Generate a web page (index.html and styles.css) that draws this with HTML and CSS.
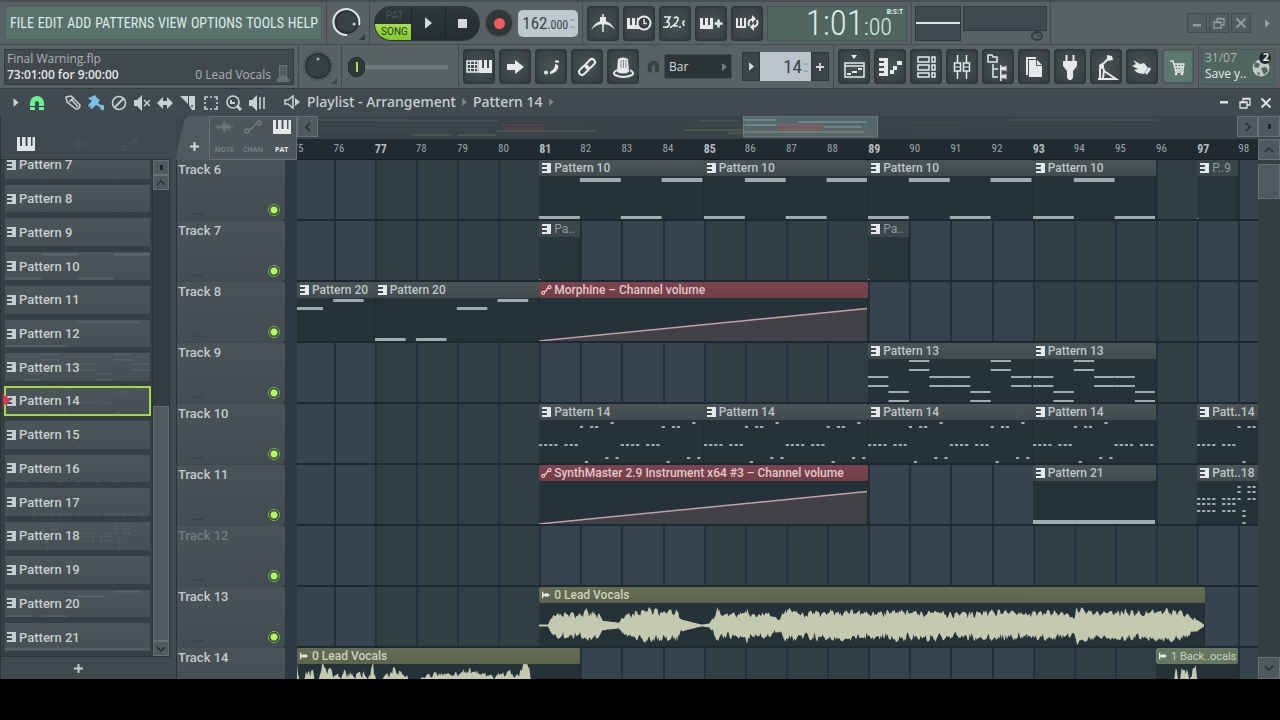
FILE: index.html
```html
<!DOCTYPE html>
<html lang="en">
<head>
    <meta charset="UTF-8">
    <meta name="viewport" content="width=device-width, initial-scale=1">
    <title>Final Warning.flp</title>
    <link rel="stylesheet" href="styles.css">
</head>
<body>
    <!-- Shared icons -->
    <svg class="symbols" aria-hidden="true">
        <symbol id="i-steps" viewBox="0 0 9 10"><path fill="currentColor" d="M4 0h5v10H0V8h5V7H4zM0 0h5v2H0zM0 4h5v2H0z"/><path stroke="#3e474a" stroke-width="1.600" d="M0 2.900h5M0 7h5"/></symbol>
        <symbol id="i-auto" viewBox="0 0 11 10"><g fill="none" stroke="currentColor" stroke-width="1.300"><circle cx="2.200" cy="7.800" r="1.500"/><circle cx="8.500" cy="2.200" r="1.500"/><path d="M3.300 6.700l2-1 .8-2 1.400-.8"/></g></symbol>
        <symbol id="i-audio" viewBox="0 0 10 9"><path fill="currentColor" d="M0 1h1.500v2.500h2V2l2 1.500V2L9 4.500 5.500 7V5.500L3.500 7V5.500h-2V8H0z"/></symbol>
        <symbol id="i-piano" viewBox="0 0 18 14"><path fill="currentColor" d="M0 0h3v9h2V0h3.500v9h2V0H14v9h1.500V0H18v14H0z"/></symbol>
        <symbol id="i-wave" viewBox="0 0 22 14"><path fill="none" stroke="currentColor" stroke-width="1.300" d="M0 7h22M3 5v4M5 4v6M7 6v2M9 3v8M11 0v14M13 2v10M15 5v4M17 3v8M19 6v2"/></symbol>
        <symbol id="i-line" viewBox="0 0 18 14"><g fill="none" stroke="currentColor" stroke-width="1.400"><circle cx="2.800" cy="11" r="2"/><circle cx="15" cy="3" r="2"/><path d="M4.500 10l4-2 2-3.500L13 4"/></g></symbol>
        <symbol id="i-magnet" viewBox="0 0 16 16"><path fill="currentColor" d="M1 15V8a7 7 0 0 1 14 0v7h-5V8a2 2 0 0 0-4 0v7z"/><path stroke="#333c40" d="M1 11.500h5M10 11.500h5"/></symbol>
        <symbol id="i-tri" viewBox="0 0 6 10"><path fill="currentColor" d="M0 0l6 5-6 5z"/></symbol>
        <symbol id="i-min" viewBox="0 0 12 12"><path fill="currentColor" d="M2 4h8v2.500H2z"/></symbol>
        <symbol id="i-restore" viewBox="0 0 12 12"><path fill="none" stroke="currentColor" stroke-width="1.300" d="M1 5h7v6H1zM1 5.500h7M4 5V1.500h7V8H8M4 2h7"/></symbol>
        <symbol id="i-close" viewBox="0 0 12 12"><path stroke="currentColor" stroke-width="2" d="M1.500 1.500l9 9M10.500 1.500l-9 9"/></symbol>
        <symbol id="i-down" viewBox="0 0 10 6"><path fill="none" stroke="currentColor" stroke-width="1.400" d="M1 1l4 4 4-4"/></symbol>
        <symbol id="i-plus" viewBox="0 0 10 10"><path stroke="currentColor" stroke-width="2.200" d="M5 0v10M0 5h10"/></symbol>
    </svg>

    <div class="app">
        <header class="toolbar">
            <div class="panel">
                <nav class="menu">
                    <button>FILE</button><button>EDIT</button><button>ADD</button><button>PATTERNS</button><button>VIEW</button><button>OPTIONS</button><button>TOOLS</button><button>HELP</button>
                </nav>
            </div>
            <div class="panel knob-panel">
                <button class="knob" aria-label="Main volume">
                    <svg viewBox="0 0 36 36"><circle cx="17" cy="17" r="11" fill="#3a4145" stroke="#2b3135" stroke-width="2"/><path d="M17 30A13 13 0 1 1 29 20" fill="none" stroke="#dfe6e6" stroke-width="2"/><circle cx="24" cy="19" r="1.500" fill="#c5cccc"/><path d="M29 35h6v-6z" fill="#343b3f"/></svg>
                </button>
            </div>
            <div class="panel transport">
                <div class="pill">
                    <div class="mode">
                        <button>PAT</button>
                        <button class="on">SONG</button>
                    </div>
                    <button class="play" aria-label="Play"><svg width="7" height="12" viewBox="0 0 6 10"><use href="#i-tri"/></svg></button>
                    <button class="stop" aria-label="Stop"><i></i></button>
                </div>
                <button class="record" aria-label="Record"><i></i></button>
                <label class="tempo"><input value="162" aria-label="Tempo"><small>.000</small><span class="spin"></span></label>
            </div>
            <div class="panel tools">
                <button class="tool" aria-label="Metronome"><svg viewBox="0 0 32 34"><path d="M4 24Q8 15 16 15t12 9q-5-6-12-6T4 24z" fill="#e4eaea"/><path d="M16 8v18" stroke="#e4eaea" stroke-width="1.500"/><path d="M13 11h6v5l-3 4-3-4z" fill="#e4eaea"/></svg></button>
                <button class="tool" aria-label="Wait for input"><svg viewBox="0 0 32 34"><path d="M4 12h3v7h2v-7h3v7h2v-7h3v11H4z" fill="#e4eaea"/><circle cx="21" cy="17" r="6.500" fill="#363d41" stroke="#e4eaea" stroke-width="2"/><path d="M21 13v4.500h3" fill="none" stroke="#e4eaea" stroke-width="1.500"/></svg></button>
                <button class="tool" aria-label="Countdown"><svg viewBox="0 0 32 34"><path d="M5 11h6l-3 5q3 0 2 3-1 3-6 2M15 12q4-2 4 1 0 3-5 7h5M26 15q-2 0-2 2l1 3M12 20v2M21 20v2" fill="none" stroke="#e4eaea" stroke-width="1.700"/></svg></button>
                <button class="tool" aria-label="Blend recording"><svg viewBox="0 0 32 34"><path d="M5 12h3v7h2v-7h3v7h2v-7h3v11H5z" fill="#e4eaea"/><path d="M23.500 13.500v8M19.500 17.500h8" stroke="#e4eaea" stroke-width="2.500"/></svg></button>
                <button class="tool" aria-label="Loop recording"><svg viewBox="0 0 32 34"><path d="M5 12h2v8h2v-8h2v8h2v-8h2v10H5z" fill="#e4eaea"/><path d="M18 20q-2-6 4-7M26 14q2 6-4 7" fill="none" stroke="#e4eaea" stroke-width="2"/><path d="M21 9l4 4-4 4zM23 17v8l-4-4z" fill="#e4eaea"/></svg></button>
                <div class="clock"><span>1:01<small>:00</small></span><sup>B:S:T</sup></div>
            </div>
            <div class="panel meters">
                <div class="scope"></div>
                <div class="cpu"><div class="cpu-box"></div><svg width="12" height="10" viewBox="0 0 12 10"><ellipse cx="6" cy="5" rx="5" ry="4" fill="none" stroke="#343c40" stroke-width="2"/><path d="M6 2v3h3" fill="none" stroke="#343c40"/></svg></div>
            </div>
            <div class="window-buttons">
                <button aria-label="Minimize"><svg><use href="#i-min" y="3"/></svg></button>
                <button aria-label="Restore"><svg><use href="#i-restore"/></svg></button>
                <button aria-label="Close"><svg><use href="#i-close"/></svg></button>
                <svg class="more" viewBox="0 0 6 10"><use href="#i-tri"/></svg>
            </div>
        </header>

        <div class="toolbar second">
            <div class="panel">
                <div class="hint">
                    <div class="file-name">Final Warning.flp</div>
                    <div class="hint-row"><strong>73:01:00 for 9:00:00</strong><span>0 Lead Vocals</span></div>
                    <svg class="hint-icon" viewBox="0 0 14 18"><path d="M3 1h8v12l3 3-2 2H2l-2-2 3-3z" fill="#667074"/><path d="M5 2v10M7 2v10M9 2v10" stroke="#41494d"/></svg>
                </div>
            </div>
            <div class="panel knob-panel pitch">
                <button class="knob" aria-label="Main pitch">
                    <svg viewBox="0 0 36 36"><circle cx="16" cy="17" r="14" fill="none" stroke="#464f53" stroke-width="2" stroke-dasharray="2 2"/><circle cx="16" cy="17" r="12" fill="#373f43" stroke="#2d3438" stroke-width="2"/><circle cx="16" cy="10" r="1.500" fill="#aab2b2"/><path d="M29 35h6v-6z" fill="#3d4549"/></svg>
                </button>
            </div>
            <div class="panel volume">
                <input type="range" value="0" aria-label="Volume">
            </div>
            <div class="panel tools">
                <button class="tool" aria-label="Typing keyboard"><svg viewBox="0 0 32 34"><path d="M4 11h11v11H4z" fill="none" stroke="#e4eaea" stroke-width="1.500"/><path d="M4 14.500h11M4 18.500h11M7.500 11v11M11.500 11v11" stroke="#e4eaea"/><path d="M16 10h3v8h2v-8h3v8h2v-8h3v13H16z" fill="#e4eaea"/></svg></button>
                <button class="tool" aria-label="Step"><svg viewBox="0 0 32 34"><path d="M8 14h8v-4l9 7-9 7v-4H8z" fill="#e4eaea"/></svg></button>
                <button class="tool" aria-label="Slide"><svg viewBox="0 0 32 34"><circle cx="11" cy="22.500" r="2" fill="#e4eaea"/><path d="M15 24q5-1 7-4 2-2 1-5l-3-1q1 4-5 8z" fill="#e4eaea"/><path d="M20 11.500h4" stroke="#e4eaea" stroke-width="2"/></svg></button>
                <button class="tool" aria-label="Link"><svg viewBox="0 0 32 34"><g fill="none" stroke="#e4eaea" stroke-width="2" transform="rotate(-45 16 17)"><rect x="6" y="14" width="11" height="6" rx="3"/><rect x="15" y="14" width="11" height="6" rx="3"/></g></svg></button>
                <button class="tool" aria-label="Plugin"><svg viewBox="0 0 32 34"><path d="M11 9q5-3 10 0l1 13q-6 3-12 0z" fill="#e4eaea"/><path d="M14 10v8M16.500 10v8M19 10v8" stroke="#7d8588"/><path d="M10 20q-5 3-2 5 8 4 17 0 3-2-2-5" fill="none" stroke="#e4eaea" stroke-width="2"/></svg></button>
                <svg class="snap-icon" viewBox="0 0 16 16"><use href="#i-magnet"/></svg>
                <select class="snap" aria-label="Snap"><option>Bar</option><option>Beat</option><option>Step</option></select>
                <div class="pattern-picker">
                    <button aria-label="Next"><svg width="5" height="9" viewBox="0 0 6 10"><use href="#i-tri"/></svg></button>
                    <label><input value="14" aria-label="Pattern number"><span class="spin"></span></label>
                    <button aria-label="Add"><svg width="8" height="8" viewBox="0 0 10 10"><use href="#i-plus"/></svg></button>
                </div>
            </div>
            <div class="panel tools windows">
                <button class="tool" aria-label="Playlist"><svg viewBox="0 0 32 34"><path d="M13 5h6l-3 4z" fill="#e4eaea"/><path d="M7 13h19v14H7zM7 16h19" fill="none" stroke="#e4eaea" stroke-width="1.500"/><path d="M9 24h4M14 22h5M20 19h4" stroke="#e4eaea" stroke-width="2"/></svg></button>
                <button class="tool" aria-label="Piano roll"><svg viewBox="0 0 32 34"><path d="M5 8h9v18H5v-3h5v-2H5v-3h5v-2H5v-3h5v-2H5z" fill="#e4eaea"/><path d="M16 22h4M19 18h4M23 13h5" stroke="#e4eaea" stroke-width="4"/></svg></button>
                <button class="tool" aria-label="Channel rack"><svg viewBox="0 0 32 34"><g fill="none" stroke="#e4eaea" stroke-width="1.500"><path d="M8 7h11v5H8zM8 15h11v5H8zM8 23h11v4H8zM22 7h3v5h-3zM22 15h3v5h-3zM22 23h3v4h-3z"/></g></svg></button>
                <button class="tool" aria-label="Mixer"><svg viewBox="0 0 32 34"><path d="M11.500 5v24M20.500 5v24" stroke="#e4eaea" stroke-width="1.500"/><g fill="#3b4347" stroke="#e4eaea" stroke-width="1.500"><rect x="8.500" y="13" width="6" height="8"/><rect x="17.500" y="13" width="6" height="8"/></g><path d="M9 17h5M18 17h5" stroke="#e4eaea"/></svg></button>
                <button class="tool" aria-label="Browser"><svg viewBox="0 0 32 34"><path d="M6 5h4l1 2h4v5H6zM11 14v13h5M11 19h5" fill="none" stroke="#e4eaea" stroke-width="1.500"/><path d="M18 15h1.500v2.500l2-2v2l3-2v6l-3-2v2l-2-2V23H18zM18 23h1.500v2.500l2-2v2l3-2v6l-3-2v2l-2-2V31H18z" fill="#e4eaea"/></svg></button>
                <button class="tool" aria-label="Project"><svg viewBox="0 0 32 34"><path d="M8 7h10v2h-8v16H8z" fill="#e4eaea"/><path d="M11 10h8l5 5v12H11z" fill="#e4eaea"/><path d="M18.500 10v5.500H24" fill="none" stroke="#525b5f"/></svg></button>
                <button class="tool" aria-label="Plugin picker"><svg viewBox="0 0 32 34"><path d="M12.500 5v7M19.500 5v7" stroke="#e4eaea" stroke-width="2"/><path d="M9 11h14v5l-4 5v7l-2 2h-2l-2-2v-7l-4-5z" fill="#e4eaea"/></svg></button>
                <button class="tool" aria-label="Tempo tapper"><svg viewBox="0 0 32 34"><path d="M10 29V19l2-3 2 4-1 8M12 15l7-7M8 29h18L14 21" fill="none" stroke="#e4eaea" stroke-width="2"/><circle cx="11.500" cy="16" r="2.500" fill="#e4eaea"/><path d="M17 5l5 1 1 4-6 1z" fill="#e4eaea"/></svg></button>
                <button class="tool" aria-label="Touch controllers"><svg viewBox="0 0 32 34"><path d="M7 10l7 4 4-1 4 5-4 6-6-1-4-3 4-1-6-3 4-2z" fill="#e4eaea"/><path d="M24 18l-4 6" stroke="#e4eaea" stroke-width="2.500"/></svg></button>
                <button class="tool cart" aria-label="Shop"><svg viewBox="0 0 32 34"><path d="M8 11h3l3 11h8M12 14h10l-1 6h-8M12 17h9M16 14v6M19 14v6" fill="none" stroke="#e4eaea" stroke-width="1.300"/><circle cx="14" cy="24" r="1.300" fill="#e4eaea"/><circle cx="20" cy="24" r="1.300" fill="#e4eaea"/></svg></button>
            </div>
            <div class="panel news-panel">
                <a class="news" href="#news"><span>31/07</span><b>Save y..</b>
                    <svg viewBox="0 0 22 26"><circle cx="10" cy="16" r="8.500" fill="#bcc9c5"/><path d="M4 10l5 2-2 4-4-1zM10 16l5-1 2 4-4 4zM6 20l3 1-1 3z" fill="#50675f"/><circle cx="14" cy="6" r="6" fill="#22292c"/></svg><em>2</em></a>
            </div>
        </div>

        <div class="titlebar">
            <div class="edit-tools">
                <button class="menu-arrow" aria-label="Options"><svg width="6" height="9" viewBox="0 0 6 10"><use href="#i-tri"/></svg></button>
                <button class="magnet" aria-label="Snap"><svg viewBox="0 0 16 16"><use href="#i-magnet"/></svg></button>
                <button aria-label="Draw"><svg viewBox="0 0 16 16"><path d="M1 2l5-1 9 9q0 4-4 4L2 7zM4 7l5-5M6 4l7 8" fill="none" stroke="currentColor" stroke-width="1.500"/></svg></button>
                <button class="paint" aria-label="Paint"><svg viewBox="0 0 16 16"><path d="M7 0l2 3 3 2-2 3 3 2h3v5h-3l-1-3-4-2-4 4-2-1 1-2-3 1 1-3 3-3-4-3 3-1z" fill="currentColor"/></svg></button>
                <button aria-label="Delete"><svg viewBox="0 0 16 16"><path d="M12.500 3.500l-9 9" stroke="currentColor" stroke-width="2"/><circle cx="8" cy="8" r="6.500" fill="none" stroke="currentColor" stroke-width="1.600"/></svg></button>
                <button aria-label="Mute"><svg viewBox="0 0 16 16"><path d="M0 5h3l5-5v16l-5-5H0z" fill="currentColor"/><path d="M10 5l6 6M16 5l-6 6" stroke="currentColor" stroke-width="1.500"/></svg></button>
                <button aria-label="Slip"><svg viewBox="0 0 16 16"><path d="M0 8l6-6v4h4V2l6 6-6 6v-4H6v4z" fill="currentColor"/></svg></button>
                <button aria-label="Slice"><svg viewBox="0 0 16 16"><path d="M0 1h8v8z" fill="currentColor"/><path d="M9 1h6v14h-3L9 10z" fill="currentColor"/><circle cx="12" cy="11" r="1" fill="#41494d"/></svg></button>
                <button aria-label="Select"><svg viewBox="0 0 16 16"><path d="M5 2H2v3M2 11v3h3M11 2h3v3M14 11v3h-3M2 7v2M14 7v2M7 2h2M7 14h2" fill="none" stroke="currentColor" stroke-width="1.600"/></svg></button>
                <button aria-label="Zoom"><svg viewBox="0 0 16 16"><circle cx="7" cy="7" r="6" fill="none" stroke="currentColor" stroke-width="1.700"/><path d="M11 11l4 4" stroke="currentColor" stroke-width="3"/><path d="M4 9V5h2v2h3v2z" fill="currentColor"/></svg></button>
                <button aria-label="Playback"><svg viewBox="0 0 16 16"><path d="M0 5h3l5-5v16l-5-5H0z" fill="currentColor"/><path d="M11 2v12M15 2v12" stroke="currentColor" stroke-width="1.600"/></svg></button>
            </div>
            <h1 class="crumbs">
                <svg width="17" height="14" viewBox="0 0 17 14"><path d="M1 5h3l5-4v12L4 9H1z" fill="none" stroke="currentColor" stroke-width="1.600"/><path d="M11 3l5 4-5 4z" fill="currentColor"/></svg>
                <span>Playlist - Arrangement</span>
                <svg class="sep" viewBox="0 0 6 10"><use href="#i-tri"/></svg>
                <span>Pattern 14</span>
                <svg class="sep" viewBox="0 0 6 10"><use href="#i-tri"/></svg>
            </h1>
            <div class="title-buttons">
                <button aria-label="Minimize"><svg><use href="#i-min"/></svg></button>
                <button aria-label="Restore"><svg><use href="#i-restore"/></svg></button>
                <button aria-label="Close"><svg><use href="#i-close"/></svg></button>
            </div>
        </div>

        <main class="workspace">
            <aside class="picker">
                <div class="picker-tabs">
                    <button class="on" aria-label="Patterns"><svg viewBox="0 0 18 14"><use href="#i-piano"/></svg></button>
                    <button aria-label="Audio"><svg viewBox="0 0 22 14"><use href="#i-wave"/></svg></button>
                    <button aria-label="Automation"><svg viewBox="0 0 18 14"><use href="#i-line"/></svg></button>
                </div>
                <div class="picker-body">
                    <div class="pattern-window"><div class="pattern-list" id="patterns"></div></div>
                    <div class="scroll left">
                        <button aria-label="Top"><i class="pip"></i></button>
                        <button class="up" aria-label="Up"><svg viewBox="0 0 10 6"><use href="#i-down"/></svg></button>
                        <div class="rail"><div class="thumb"></div></div>
                        <button aria-label="Down"><svg viewBox="0 0 10 6"><use href="#i-down"/></svg></button>
                    </div>
                </div>
                <button class="add-pattern" aria-label="Add pattern"><svg width="9" height="9" viewBox="0 0 10 10"><use href="#i-plus"/></svg></button>
            </aside>

            <section class="playlist">
                <div class="corner">
                    <button class="add-track" aria-label="Add track"><svg width="9" height="9" viewBox="0 0 10 10"><use href="#i-plus"/></svg></button>
                    <div class="focus">
                        <button><svg viewBox="0 0 22 14"><use href="#i-wave"/></svg>NOTE</button>
                        <button><svg viewBox="0 0 18 14"><use href="#i-line"/></svg>CHAN</button>
                        <button class="on"><svg viewBox="0 0 18 14"><use href="#i-piano"/></svg>PAT</button>
                    </div>
                </div>
                <div class="timeline">
                    <div class="overview">
                        <button class="go left" aria-label="Scroll left"><svg viewBox="0 0 10 6"><use href="#i-down"/></svg></button>
                        <svg class="minimap" viewBox="0 0 918 23" preserveAspectRatio="none">
                            <path d="M0 4h90M60 5h120M380 5h40M690 4h150" stroke="#464f52" stroke-width="2"/>
                            <path d="M190 9h75M370 9h55M430 12h130M215 6h50M560 7h240M590 12h50M0 13h170" stroke="#424b4f"/>
                            <path d="M184 9h43M184 12h43" stroke="#6a4046"/>
                            <path d="M93 19h40M140 19h38M178 15h100M365 14h60M410 17h15" stroke="#626a52"/>
                            <rect x="425" width="134" height="21" fill="#566769" stroke="#708081"/>
                            <path d="M426 4h32M426 9h32M480 6h68M505 11h38" stroke="#6c848c" stroke-width="2"/>
                            <path d="M459 9h45M459 13h45" stroke="#8c5963" stroke-width="2"/>
                            <path d="M426 16h120" stroke="#8d9677"/>
                        </svg>
                        <button class="go right" aria-label="Scroll right"><svg viewBox="0 0 10 6"><use href="#i-down"/></svg></button>
                    </div>
                    <div class="ruler" id="ruler"></div>
                </div>
                <div class="side-top">
                    <button aria-label="Detach"><i class="pip"></i></button>
                    <button class="up" aria-label="Scroll up"><svg viewBox="0 0 10 6"><use href="#i-down"/></svg></button>
                </div>
                <div class="track-heads" id="heads"></div>
                <div class="lanes-wrap">
                    <div class="lanes" id="lanes"></div>
                </div>
                <div class="scroll right">
                    <div class="rail"><div class="thumb"></div></div>
                    <button aria-label="Scroll down"><svg viewBox="0 0 10 6"><use href="#i-down"/></svg></button>
                </div>
            </section>
        </main>
    </div>
    <script src="playlist.js"></script>
</body>
</html>
```
FILE: styles.css
```css
* {
    margin: 0;
    padding: 0;
    box-sizing: border-box;
}

body {
    height: 100vh;
    padding-bottom: 41px;
    background: #000;
    color: #d3dad9;
    font-family: "Open Sans", "Noto Sans", sans-serif;
    font-size: 12px;
    overflow: hidden;
}

button,
input,
select {
    font: inherit;
    color: inherit;
    border: none;
    background: none;
}

button {
    cursor: pointer;
    display: flex;
    align-items: center;
    justify-content: center;
}

svg {
    display: block;
}

.symbols {
    display: none;
}

.app {
    height: 100%;
    display: flex;
    flex-direction: column;
    background: #3c464b;
    overflow: hidden;
}

/* Toolbars */
.toolbar {
    flex: none;
    height: 45px;
    display: flex;
    background: #596164;
    border-top: 2px solid #484f52;
    border-bottom: 1px solid #454c4f;
}

.toolbar.second {
    height: 44px;
    border-top: none;
    border-bottom: 1px solid #343b3f;
}

.panel {
    flex: none;
    display: flex;
    align-items: center;
    padding: 0 4px;
    border-right: 1px solid #454c4f;
}

.menu {
    display: flex;
    align-items: center;
    justify-content: space-between;
    width: 317px;
    height: 34px;
    margin-left: 1px;
    padding: 0 3px 0 4px;
    background: #59736c;
    border: 1px solid #4d605b;
    font-family: "Roboto Condensed", "Liberation Sans Narrow", Roboto, sans-serif;
    font-size: 14px;
    color: #dcebe6;
}

.knob-panel {
    width: 43px;
    padding: 0 3px;
}

.knob {
    width: 36px;
    height: 36px;
}

.knob svg {
    width: 36px;
    height: 36px;
}

.transport {
    gap: 5px;
    width: 213px;
}

.pill {
    display: flex;
    width: 107px;
    height: 35px;
    border-radius: 17px;
    border: 1px solid #30373a;
    background: linear-gradient(#31383b, #262d30);
    overflow: hidden;
}

.pill > button {
    width: 34px;
    border-left: 1px solid #1f2528;
}

.stop i {
    width: 9px;
    height: 9px;
    background: #d3dad9;
}

.mode {
    width: 36px;
    display: flex;
    flex-direction: column;
    font-family: Roboto, sans-serif;
    font-size: 10px;
}

.mode button {
    height: 18px;
    padding-left: 3px;
    color: #4c5558;
}

.mode .on {
    height: 16px;
    background: linear-gradient(#a5e04d, #7fc930);
    color: #26401b;
}

.record {
    width: 28px;
    height: 28px;
    border-radius: 50%;
    border: 1px solid #4c5356;
    background: #30373a;
}

.record i {
    width: 11px;
    height: 11px;
    border-radius: 50%;
    background: #f05a5c;
}

.tempo {
    display: flex;
    align-items: center;
    width: 60px;
    height: 27px;
    padding: 0 2px 0 4px;
    border-radius: 5px;
    background: #bccacd;
    color: #394549;
    font-family: "Roboto Condensed", "Liberation Sans Narrow", Roboto, sans-serif;
    font-size: 17px;
}

.tempo input {
    width: 25px;
}

.tempo small {
    padding-top: 4px;
    font-size: 12px;
}

.spin {
    flex: none;
    width: 7px;
    height: 12px;
    margin-left: auto;
    background:
        linear-gradient(#a0aeb1, #a0aeb1) center 2px / 5px 2px no-repeat,
        linear-gradient(#a0aeb1, #a0aeb1) center 9px / 5px 2px no-repeat;
}

.tools {
    gap: 4px;
    padding: 0 4px;
}

.tool {
    width: 32px;
    height: 35px;
    border: 1px solid #2f363a;
    border-radius: 3px;
    background: radial-gradient(#4a5256, #363d41);
    box-shadow: inset 0 0 2px #262c30;
}

.tool svg {
    width: 32px;
    height: 34px;
    flex: none;
}

.clock {
    position: relative;
    width: 140px;
    height: 35px;
    padding-right: 14px;
    background: #50665f;
    border: 1px solid #465853;
    color: #d9ece6;
    text-align: right;
    font-family: "Roboto Condensed", "Liberation Sans Narrow", Roboto, sans-serif;
    font-size: 35px;
    font-weight: 300;
    line-height: 33px;
}

.clock small {
    font-size: 24px;
    line-height: 20px;
}

.clock sup {
    position: absolute;
    top: 1px;
    right: 3px;
    font: bold 7px/7px "Open Sans", sans-serif;
}

.meters {
    gap: 2px;
    padding: 0 3px;
}

.scope {
    width: 46px;
    height: 35px;
    border: 1px solid #31383c;
    background: linear-gradient(#dfe6e6, #dfe6e6) center / 100% 2px no-repeat #40484d;
}

.cpu-box {
    width: 84px;
    height: 25px;
    border: 1px solid #343b3f;
    background: #40484d;
}

.cpu svg {
    margin-left: auto;
    margin-right: 4px;
}

.window-buttons {
    flex: 1;
    display: flex;
    align-items: center;
    justify-content: flex-end;
    gap: 2px;
    padding-right: 10px;
    color: #939b9c;
}

.window-buttons button {
    width: 20px;
    height: 20px;
    border: 1px solid #42494c;
    background: #535b5e;
}

.window-buttons button svg,
.title-buttons svg {
    width: 12px;
    height: 12px;
}

.window-buttons .more {
    width: 5px;
    height: 9px;
    margin-left: 12px;
}

.hint {
    display: grid;
    grid-template-columns: 1fr 14px;
    column-gap: 5px;
    align-content: center;
    width: 290px;
    height: 36px;
    padding: 0 3px 0 2px;
    border: 1px solid #353c40;
    background: #42494d;
    color: #aab2b2;
    font-size: 12px;
    line-height: 16px;
}

.hint-row {
    display: flex;
    justify-content: space-between;
    grid-row: 2;
}

.hint strong {
    color: #e2e7e6;
    font-weight: 600;
}

.hint-icon {
    grid-row: 1 / 3;
    grid-column: 2;
    align-self: end;
    width: 14px;
    height: 20px;
}

.volume {
    width: 117px;
    padding: 0 10px 0 6px;
}

.volume input {
    appearance: none;
    width: 100%;
    height: 20px;
    background: linear-gradient(#72797b, #72797b) center / 100% 4px no-repeat;
}

.volume input::-webkit-slider-thumb {
    appearance: none;
    width: 17px;
    height: 20px;
    border: 1px solid #23292c;
    border-radius: 8px;
    background: linear-gradient(#b8d957, #b8d957) center / 2px 10px no-repeat #30383a;
}

.snap-icon {
    width: 13px;
    height: 15px;
    margin-left: 4px;
    color: #394145;
}

.snap {
    appearance: none;
    width: 68px;
    height: 25px;
    padding-left: 4px;
    border: 1px solid #464d51;
    border-radius: 2px;
    background: url("data:image/svg+xml,%3Csvg xmlns='http://www.w3.org/2000/svg' viewBox='0 0 6 10'%3E%3Cpath fill='%23757d7e' d='M0 0l6 5-6 5z'/%3E%3C/svg%3E") 57px center / 5px 8px no-repeat #2d3438;
}

.pattern-picker {
    display: flex;
    height: 29px;
    margin: 0 0 0 6px;
}

.pattern-picker > button {
    width: 18px;
    border: 1px solid #2f363a;
    background: #3c4448;
}

.pattern-picker label {
    display: flex;
    align-items: center;
    width: 51px;
    background: #b9c5ca;
    padding-right: 2px;
    color: #374348;
    font-family: "Roboto Condensed", "Liberation Sans Narrow", Roboto, sans-serif;
    font-size: 19px;
}

.pattern-picker input {
    flex: 1;
    width: 20px;
    text-align: right;
}

.cart {
    border-color: #435650;
    background: #5d7870;
}

.news-panel {
    flex: 1;
    padding: 0 5px 0 2px;
    border-right: none;
}

.news {
    position: relative;
    flex: 1;
    height: 36px;
    padding-left: 3px;
    background: #50655f;
    border: 1px solid #465853;
    color: #e4ebe9;
    line-height: 16px;
    text-decoration: none;
}

.news span {
    display: block;
    color: #a7b7b2;
}

.news b {
    font-weight: 500;
}

.news svg {
    position: absolute;
    right: 1px;
    top: 2px;
    width: 22px;
    height: 26px;
}

.news em {
    position: absolute;
    right: 5px;
    top: 0;
    font: bold 11px/14px "Open Sans", sans-serif;
}

/* Playlist title bar */
.titlebar {
    flex: none;
    display: flex;
    align-items: center;
    height: 27px;
    background: #414a4f;
    color: #c9d0d0;
}

.edit-tools {
    display: flex;
    gap: 7px;
    padding-left: 12px;
}

.edit-tools button {
    width: 16px;
    height: 16px;
}

.edit-tools button svg {
    flex: none;
}

.edit-tools .menu-arrow {
    width: 8px;
}

.edit-tools .magnet {
    margin-left: 2px;
    margin-right: 13px;
    color: #6df08f;
}

.edit-tools .paint {
    color: #79c0e6;
}

.crumbs {
    flex: 1;
    display: flex;
    align-items: center;
    gap: 6px;
    padding-left: 19px;
    font-family: "Noto Sans", "Open Sans", sans-serif;
    font-size: 14px;
    font-weight: 500;
    line-height: 24px;
    padding-bottom: 2px;
}

.crumbs .sep {
    width: 5px;
    height: 8px;
    color: #7d8587;
}

.title-buttons {
    display: flex;
    gap: 9px;
    padding-right: 8px;
    color: #dde2e2;
}

/* Pattern picker */
.workspace {
    flex: 1;
    min-height: 0;
    display: flex;
}

.picker {
    flex: none;
    width: 176px;
    display: flex;
    flex-direction: column;
    border-left: 1px solid #2d3539;
    background: #3f494e;
}

.picker-tabs {
    flex: none;
    display: flex;
    align-items: flex-end;
    gap: 34px;
    height: 43px;
    padding: 0 0 8px 16px;
    color: #4a5357;
}

.picker-tabs svg {
    width: 18px;
    height: 14px;
}

.picker-tabs .on {
    color: #e0e6e5;
}

.picker-body {
    flex: 1;
    min-height: 0;
    display: flex;
    width: 169px;
    border-top: 1px solid #2c3438;
    border-right: 1px solid #2c3438;
    border-bottom: 1px solid #2c3438;
    background: #363f44;
}

.pattern-window {
    flex: 1;
    overflow: hidden;
    display: flex;
    padding: 0 1px 4px 3px;
}

.pattern-list {
    flex: 1;
    display: grid;
    grid-auto-rows: 1fr;
    row-gap: 4px;
    margin-top: -10px;
}

.pattern {
    position: relative;
    justify-content: flex-start;
    gap: 3px;
    padding-left: 2px;
    border: 1px solid transparent;
    background: linear-gradient(#4c5559, #464f53) padding-box;
    font-family: Roboto, sans-serif;
    font-size: 13px;
    font-weight: 500;
    color: #c6cecd;
    min-height: 0;
}

.pattern .icon {
    flex: none;
    width: 9px;
    height: 10px;
}

.pattern .notes {
    position: absolute;
    inset: 0;
    width: 100%;
    height: 100%;
    opacity: 0.18;
}

.pattern.selected {
    border: 2px solid #a3d752;
    padding-left: 1px;
}

.pattern.selected::before {
    content: "";
    position: absolute;
    left: -3px;
    top: 6px;
    border: 6px solid transparent;
    border-left: 8px solid #e0335b;
    border-right: none;
}

.scroll {
    display: flex;
    flex-direction: column;
    background: #343d42;
}

.scroll button,
.side-top button,
.go {
    flex: none;
    border: 1px solid #687174;
    background: #50595d;
    color: #252c30;
}

.scroll button svg,
.side-top button svg,
.go svg {
    width: 10px;
    height: 6px;
}

.up svg {
    transform: rotate(180deg);
}

.pip {
    width: 3px;
    height: 5px;
    background: #20272a;
}

.rail {
    flex: 1;
}

.scroll .thumb {
    border: 1px solid #667073;
    background: #50595d;
}

.scroll.left {
    width: 17px;
    border-left: 1px solid #2c3438;
}

.scroll.left button {
    height: 15px;
}

.scroll.left .rail {
    display: flex;
    align-items: flex-end;
}

.scroll.left .thumb {
    width: 100%;
    height: 52%;
}

.add-pattern {
    flex: none;
    width: 154px;
    height: 22px;
    color: #c9d0d0;
}

/* Playlist */
.playlist {
    flex: 1;
    min-width: 0;
    display: grid;
    grid-template-columns: 121px 1fr 22px;
    grid-template-rows: 44px 1fr;
}

.corner {
    display: flex;
}

.add-track {
    width: 33px;
    align-items: flex-end;
    padding: 0 0 9px 4px;
    background: #50595d;
    clip-path: polygon(40% 0, 100% 0, 100% 100%, 0 100%, 6% 70%, 26% 8%);
}

.focus {
    flex: 1;
    display: grid;
    grid-template-columns: repeat(3, 1fr);
    align-items: start;
    padding-top: 3px;
    border: 1px solid #687174;
    background: #4d565a;
    color: #747d7f;
    font-size: 7px;
    font-weight: bold;
}

.focus button {
    flex-direction: column;
    gap: 12px;
    line-height: 8px;
}

.focus svg {
    width: 18px;
    height: 14px;
}

.focus .on {
    color: #e4e9e8;
}

.timeline {
    min-width: 0;
    display: flex;
    flex-direction: column;
}

.overview {
    flex: none;
    display: flex;
    height: 23px;
    background: #3a4347;
}

.go {
    width: 21px;
    height: 21px;
}

.go.left svg {
    transform: rotate(90deg);
}

.go.right svg {
    transform: rotate(-90deg);
}

.minimap {
    flex: 1;
    min-width: 0;
    height: 23px;
}

.ruler {
    position: relative;
    flex: 1;
    overflow: hidden;
    background: #1f2b31;
    border-bottom: 1px solid #151d21;
    color: #9ca6a8;
    font-family: "Roboto Condensed", "Liberation Sans Narrow", Roboto, sans-serif;
    font-size: 11px;
    line-height: 20px;
}

.ruler span {
    position: absolute;
}

.ruler .strong {
    font-size: 12px;
    font-weight: bold;
    color: #b4bdbe;
}

.side-top {
    display: flex;
    flex-direction: column;
    gap: 2px;
}

.side-top button {
    height: 21px;
}

.track-heads {
    overflow: hidden;
    display: flex;
    flex-direction: column;
    background: #2c3b43;
}

.track {
    position: relative;
    flex: none;
    width: 109px;
    height: 61px;
    padding: 0 1px;
    border-left: 1px solid #2c3438;
    background: linear-gradient(#4a5357, #434d51);
    border-bottom: 1px solid #40494d;
    border-bottom-right-radius: 5px;
    font-family: Roboto, sans-serif;
    font-size: 13px;
    font-weight: 500;
    line-height: 20px;
    color: #c3cbca;
}

.track.muted {
    color: #737c7e;
}

.track .dots {
    position: absolute;
    left: 16px;
    bottom: 5px;
    font-size: 12px;
    line-height: 8px;
    color: #2c3438;
}

.led {
    position: absolute;
    right: 5px;
    bottom: 4px;
    width: 12px;
    height: 12px;
    border: 1px solid #80a864;
    border-radius: 50%;
    background: radial-gradient(#b4fa64 40%, #31452f 60%);
}

.lanes-wrap {
    min-width: 0;
    overflow: hidden;
    position: relative;
}

.lane {
    position: relative;
    height: 61px;
    background: #303f47;
    border-bottom: 2px solid #1d2930;
    overflow: hidden;
}

.bar {
    position: absolute;
    top: 0;
    bottom: 0;
    border-left: 2px solid #23323a;
    background: #303e46;
}

.bar.light {
    background: #36454d;
}

.clip {
    position: absolute;
    top: 0;
    bottom: 0;
    display: flex;
    flex-direction: column;
    overflow: hidden;
}

.clip-title {
    flex: none;
    display: flex;
    align-items: center;
    gap: 3px;
    height: 16px;
    padding-left: 3px;
    border-radius: 2px;
    background: linear-gradient(#4b5557, #414b4e);
    color: #bdc6c6;
    font-family: Roboto, sans-serif;
    font-size: 12px;
    font-weight: 500;
    white-space: nowrap;
}

.clip-title .icon {
    flex: none;
    width: 9px;
    height: 10px;
    color: #e3eae9;
}

.clip-body {
    flex: 1;
    position: relative;
    background: #25323a;
    border-right: 1px solid #202c33;
}

.clip-body svg {
    width: 100%;
    height: 44px;
}

.clip.dim .clip-title {
    background: #3b474a;
    color: #929c9d;
    font-weight: 400;
}

.clip.dim .clip-body {
    background: #29373b;
}

.clip.auto .clip-title {
    background: linear-gradient(#7c444e, #703e48);
    color: #e3c8cb;
    gap: 2px;
    padding-left: 2px;
}

.clip.auto .icon {
    width: 11px;
    color: #f1c3c8;
}

.clip.audio .clip-title {
    background: linear-gradient(#656d53, #5b634b);
    color: #ccd2bd;
}

.clip.back .clip-title {
    background: #64785f;
    font-size: 11px;
    font-weight: 400;
}

.scroll.right {
    background: #363e41;
    padding-top: 4px;
}

.scroll.right .thumb {
    height: 35px;
}

.scroll.right button {
    height: 22px;
}
```
FILE: playlist.js
```js
const FIRST_BAR = 75.11;  // left edge of the view
const BARS = 23.37;       // bars visible
const BAR_W = 41;

// Notes: [start bar, y, length in bars, thickness]
const dashes = [0, 0.125, 0.25, 0.375, 0.62, 0.75, 0.87];
const patterns = {
    7: [[1, 41, 0.06, 2], [3, 41, 0.06, 2]],
    8: [[1, 41, 0.06, 2], [3, 41, 0.06, 2], [3.5, 41, 0.06, 2]],
    9: [[0, 42, 0.03, 2]],
    10: [[0, 40, 1, 4], [1, 2, 1, 4], [2, 40, 1, 4], [3, 2, 1, 4]],
    11: [[0, 42, 0.03, 2]],
    12: [[0, 40, 1.7, 3], [2, 2, 1.7, 3]],
    13: [],
    14: [],
    15: [0, 1, 2, 3].map(b => [b, 41, 0.06, 2]),
    16: [0, 0.5, 1, 1.5, 2, 2.5, 3, 3.5].map(b => [b, 41, 0.08, 2]),
    17: Array.from({length: 16}, (_, i) => [i / 4, 41, 0.08, 2]),
    18: [],
    19: [0.5, 1.5, 2.5, 3.5].map(b => [b, 41, 0.06, 2]),
    20: [[0, 40, 0.75, 3], [1, 40, 0.75, 3], [2, 9, 0.75, 3], [3, 1, 0.75, 3]],
    21: [[0, 39, 4, 4]]
};
[0, 2].forEach(o => {
    [[0, 17, 0.5], [0, 26, 0.5], [0.5, 32, 0.5], [0.5, 41, 0.5], [1, 1, 0.5], [1, 10, 0.5], [1.5, 17, 0.5], [1.5, 26, 0.5]]
        .forEach(n => patterns[13].push([n[0] + o, n[1], n[2], 2]));
    dashes.forEach(d => {
        patterns[14].push([d + o, 24, 0.08, 2]);
        [17, 22, 29].forEach(y => patterns[18].push([d + o, y, 0.08, 2]));
    });
    [[1, 6], [1.25, 6], [1.37, 6], [1.75, 2], [1.12, 41], [1.62, 37], [1.87, 37]]
        .forEach(n => patterns[14].push([n[0] + o, n[1], 0.08, 2]));
    [1, 1.25, 1.37].forEach(x => [5, 10, 17].forEach(y => patterns[18].push([x + o, y, 0.08, 2])));
    [29, 34, 41].forEach(y => patterns[18].push([1.12 + o, y, 0.08, 2]));
});

const tracks = [
    {name: 'Track 6', clips: [
        {bar: 81, len: 4, pat: 10}, {bar: 85, len: 4, pat: 10}, {bar: 89, len: 4, pat: 10}, {bar: 93, len: 3, pat: 10},
        {bar: 97, len: 1, pat: 9, title: 'P..9', dim: true}]},
    {name: 'Track 7', clips: [
        {bar: 81, len: 1, pat: 9, title: 'Pa..', dim: true}, {bar: 89, len: 1, pat: 9, title: 'Pa..', dim: true}]},
    {name: 'Track 8', clips: [
        {bar: 75.11, len: 1.89, pat: 20, from: 2.11}, {bar: 77, len: 4, pat: 20},
        {bar: 81, len: 8, auto: true, title: 'Morphine – Channel volume'}]},
    {name: 'Track 9', clips: [{bar: 89, len: 4, pat: 13}, {bar: 93, len: 3, pat: 13}]},
    {name: 'Track 10', clips: [
        {bar: 81, len: 4, pat: 14}, {bar: 85, len: 4, pat: 14}, {bar: 89, len: 4, pat: 14}, {bar: 93, len: 3, pat: 14},
        {bar: 97, len: 1.5, pat: 14, title: 'Patt..14'}]},
    {name: 'Track 11', clips: [
        {bar: 81, len: 8, auto: true, title: 'SynthMaster 2.9 Instrument x64 #3 – Channel volume'},
        {bar: 93, len: 3, pat: 21}, {bar: 97, len: 1.5, pat: 18, title: 'Patt..18'}]},
    {name: 'Track 12', muted: true, clips: []},
    {name: 'Track 13', clips: [{bar: 81, len: 16.2, title: '0 Lead Vocals', wave: [
        [0, 1], [9, 1], [15, 14], [28, 14], [42, 13], [46, 18], [60, 13], [64, 5], [80, 3], [85, 12], [104, 17], [114, 20], [124, 16],
        [138, 17], [143, 6], [162, 1], [170, 2], [176, 12], [178, 21], [182, 14], [200, 13], [208, 18], [214, 12], [226, 15],
        [238, 8], [240, 6], [246, 20], [256, 16], [264, 13], [276, 17], [284, 14], [290, 17], [310, 17], [330, 14], [345, 16],
        [360, 17], [380, 15], [396, 17], [412, 14], [440, 16], [464, 17], [484, 14], [510, 16], [528, 14], [534, 9], [537, 20],
        [560, 14], [580, 18], [600, 15], [625, 18], [645, 15], [667, 15], [674, 21], [700, 18]]}]},
    {name: 'Track 14', clips: [
        {bar: 75.11, len: 6.89, title: '0 Lead Vocals', wave: [
            [0, 26], [3, 6], [7, 6], [9, 21], [13, 14], [16, 26], [18, 3], [21, 3], [24, 26], [38, 15], [44, 12], [48, 18], [58, 13],
            [66, 19], [70, 9], [76, 26], [80, 3], [88, 13], [98, 21], [110, 11], [114, 3], [124, 10], [140, 17], [156, 14], [170, 19],
            [184, 17], [196, 11], [206, 17], [208, 11], [211, 28], [214, 13], [222, 15], [226, 28], [232, 24], [234, 2], [283, 1]]},
        {bar: 96, len: 2, title: '1 Back..ocals', back: true, wave: [
            [0, 1], [18, 2], [20, 26], [23, 4], [26, 19], [31, 22], [34, 4], [37, 26], [40, 24], [42, 2], [82, 1]]}]}
];

function icon(id) {
    const box = {steps: '0 0 9 10', auto: '0 0 11 10', audio: '0 0 10 9'}[id];
    return `<svg class="icon" viewBox="${box}"><use href="#i-${id}"/></svg>`;
}

function notesSvg(pat, from, len) {
    const rects = patterns[pat].map(n =>
        `<rect x="${n[0] * BAR_W}" y="${n[1]}" width="${n[2] * BAR_W}" height="${n[3]}"/>`).join('');
    return `<svg class="notes" viewBox="${from * BAR_W} 0 ${len * BAR_W} 44" preserveAspectRatio="none" fill="#9eabaf">${rects}</svg>`;
}

function autoSvg() {
    return `<svg viewBox="0 0 328 44" preserveAspectRatio="none"><path d="M0 44L328 11V44z" fill="#414148"/>
        <path d="M0 43L328 10.500" stroke="#cda0a8" stroke-width="1.500"/></svg>`;
}

// Interpolates the loudness envelope and roughens it
function waveSvg(env, len) {
    const width = Math.round(len * BAR_W);
    const top = [];
    const bottom = [];
    let seed = 7;
    const rand = () => (seed = (seed * 16807) % 2147483647) / 2147483647;
    let k = 0;
    for (let x = 0; x <= width; x++) {
        while (k < env.length - 2 && env[k + 1][0] <= x) k++;
        const [x0, a0] = env[k];
        const [x1, a1] = env[k + 1];
        let amp = a0 + (a1 - a0) * Math.min(1, (x - x0) / (x1 - x0));
        amp = Math.min(amp, 1 + (width - x) * 0.7);
        const rough = amp > 6 ? 1 : 0.2;
        const up = 1 - rough * (0.1 + 0.4 * rand() * rand() + 0.1 * Math.sin(x * 0.9));
        const down = 1 - rough * (0.1 + 0.45 * rand() * rand() + 0.1 * Math.sin(x * 0.8 + 2));
        top.push(`${x} ${(22.5 - amp * up).toFixed(1)}`);
        bottom.unshift(`${x} ${(22.5 + amp * down).toFixed(1)}`);
    }
    return `<svg viewBox="0 0 ${width} 44" preserveAspectRatio="none"><path fill="#c3cab0" d="M${top.join('L')}L${bottom.join('L')}z"/></svg>`;
}

const pct = bars => (bars / BARS * 100).toFixed(3) + '%';

function clipHtml(c) {
    let type = 'steps';
    let cls = 'clip';
    let body;
    if (c.auto) {
        type = 'auto';
        cls += ' auto';
        body = autoSvg();
    } else if (c.wave) {
        type = 'audio';
        cls += c.back ? ' audio back' : ' audio';
        body = waveSvg(c.wave, c.len);
    } else {
        body = notesSvg(c.pat, c.from || 0, c.len);
    }
    if (c.dim) cls += ' dim';
    return `<div class="${cls}" style="left:${pct(c.bar - FIRST_BAR)};width:${pct(c.len)}">
        <div class="clip-title">${icon(type)}<span>${c.title || 'Pattern ' + c.pat}</span></div>
        <div class="clip-body">${body}</div></div>`;
}

let cells = '';
let labels = '';
for (let b = 75; b <= 98; b++) {
    const light = Math.floor((b - 73) / 4) % 2 === 0;
    cells += `<div class="bar${light ? ' light' : ''}" style="left:${pct(b - FIRST_BAR)};width:${pct(1)}"></div>`;
    labels += `<span class="${b % 4 === 1 ? 'strong' : ''}" style="left:${pct(b - FIRST_BAR)}">${b}</span>`;
}
document.getElementById('ruler').innerHTML = labels;

document.getElementById('heads').innerHTML = tracks.map(t =>
    `<div class="track${t.muted ? ' muted' : ''}">${t.name}<span class="dots">...</span>
        <button class="led" aria-label="Mute ${t.name}"></button></div>`).join('');

document.getElementById('lanes').innerHTML = tracks.map(t =>
    `<div class="lane">${cells}${t.clips.map(clipHtml).join('')}</div>`).join('');

let list = '';
for (let p = 7; p <= 21; p++) {
    list += `<button class="pattern${p === 14 ? ' selected' : ''}">${icon('steps')}Pattern ${p}${notesSvg(p, 0, 4)}</button>`;
}
document.getElementById('patterns').innerHTML = list;
```
